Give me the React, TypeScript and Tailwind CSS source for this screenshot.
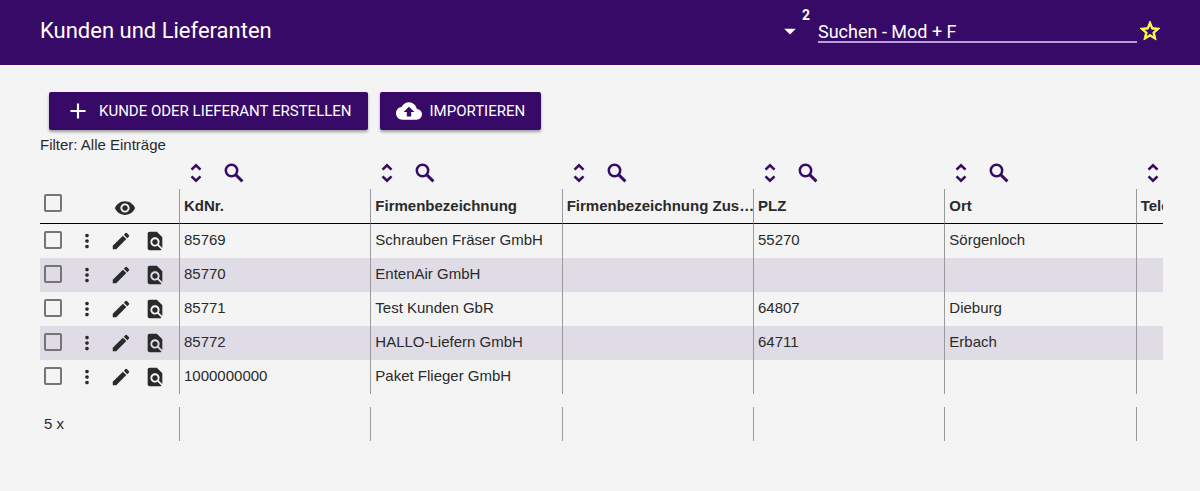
import {
  MdAdd,
  MdArrowDropDown,
  MdCloudUpload,
  MdEdit,
  MdFindInPage,
  MdMoreVert,
  MdVisibility,
} from 'react-icons/md'

interface Customer {
  id: string
  company: string
  suffix: string
  zip: string
  city: string
  phone: string
}

const columns: { key: keyof Customer; label: string }[] = [
  { key: 'id', label: 'KdNr.' },
  { key: 'company', label: 'Firmenbezeichnung' },
  { key: 'suffix', label: 'Firmenbezeichnung Zus…' },
  { key: 'zip', label: 'PLZ' },
  { key: 'city', label: 'Ort' },
  { key: 'phone', label: 'Telefon' },
]

const customers: Customer[] = [
  { id: '85769', company: 'Schrauben Fräser GmbH', suffix: '', zip: '55270', city: 'Sörgenloch', phone: '' },
  { id: '85770', company: 'EntenAir GmbH', suffix: '', zip: '', city: '', phone: '' },
  { id: '85771', company: 'Test Kunden GbR', suffix: '', zip: '64807', city: 'Dieburg', phone: '' },
  { id: '85772', company: 'HALLO-Liefern GmbH', suffix: '', zip: '64711', city: 'Erbach', phone: '' },
  { id: '1000000000', company: 'Paket Flieger GmbH', suffix: '', zip: '', city: '', phone: '' },
]

function StarIcon() {
  return (
    <svg viewBox="0 0 24 24" className="h-6 w-6" fill="currentColor" stroke="currentColor" strokeWidth="0.8">
      <path d="M22 9.24l-7.19-.62L12 2 9.19 8.63 2 9.24l5.46 4.73L5.82 21 12 17.27 18.18 21l-1.63-7.03L22 9.24zM12 15.4l-3.76 2.27 1-4.28-3.32-2.88 4.38-.38L12 6.1l1.71 4.04 4.38.38-3.32 2.88 1 4.28L12 15.4z" />
    </svg>
  )
}

function SortIcon() {
  return (
    <svg viewBox="0 0 24 24" className="h-6 w-6" fill="none" stroke="currentColor" strokeWidth="2.6">
      <path d="M7.5 8.6L12 4.4l4.5 4.2M7.5 15.4l4.5 4.2 4.5-4.2" />
    </svg>
  )
}

function SearchIcon() {
  return (
    <svg viewBox="0 0 24 24" className="h-6 w-6" fill="none" stroke="currentColor">
      <circle cx="9.5" cy="9.5" r="5.7" strokeWidth="2.5" />
      <path d="M13.6 13.6l6.8 6.8" strokeWidth="2.9" />
    </svg>
  )
}

function Checkbox({ label }: { label: string }) {
  return (
    <input
      type="checkbox"
      aria-label={label}
      className="block h-[18px] w-[18px] shrink-0 appearance-none rounded-xs border-2 border-[#757477] checked:bg-[#370a68]"
    />
  )
}

function Header() {
  return (
    <header className="flex h-[65px] items-center bg-[#370a68] pr-[38px] pb-1 pl-10 font-['Roboto',sans-serif] text-white">
      <h1 className="grow text-[22px] leading-6">Kunden und Lieferanten</h1>
      <button type="button" aria-label="Suchverlauf" className="relative mr-[14px] text-white">
        <MdArrowDropDown className="h-7 w-7" />
        <span className="absolute -top-2.5 left-[26px] text-sm leading-4 font-bold">2</span>
      </button>
      <input
        type="text"
        aria-label="Suchen"
        placeholder="Suchen - Mod + F"
        className="h-6 w-[319px] border-b-2 border-[#b99fdc] bg-transparent pt-1 text-lg leading-5 text-white outline-none placeholder:text-white"
      />
      <button type="button" aria-label="Favorit" className="ml-px text-[#ffff4d]">
        <StarIcon />
      </button>
    </header>
  )
}

function Toolbar() {
  const button =
    "flex h-[38px] items-center rounded-xs bg-[#370a68] px-4 font-['Roboto',sans-serif] text-[15px] text-white shadow-[0_2px_3px_rgba(0,0,0,0.35)]"
  return (
    <div className="flex gap-3 pl-[9px]">
      <button type="button" className={button}>
        <MdAdd className="mr-2 h-[26px] w-[26px]" />
        KUNDE ODER LIEFERANT ERSTELLEN
      </button>
      <button type="button" className={button}>
        <MdCloudUpload className="mr-2 h-[26px] w-[26px]" />
        IMPORTIEREN
      </button>
    </div>
  )
}

function CustomerTable() {
  return (
    <div className="overflow-hidden">
      <table className="w-[1287px] table-fixed border-separate border-spacing-0 text-left">
        <colgroup>
          <col className="w-[139px]" />
          {columns.map((column) => (
            <col key={column.key} />
          ))}
        </colgroup>
        <thead>
          <tr className="h-[34px]">
            <td />
            {columns.map((column) => (
              <td key={column.key} className="pt-0.5 pl-[5px]">
                <div className="flex gap-[14px] text-[#370a68]">
                  <button type="button" aria-label={`${column.label} sortieren`}>
                    <SortIcon />
                  </button>
                  <button type="button" aria-label={`${column.label} suchen`}>
                    <SearchIcon />
                  </button>
                </div>
              </td>
            ))}
          </tr>
          <tr className="h-[35px]">
            <th className="border-b border-black pl-1">
              <div className="flex items-center gap-[52px]">
                <div className="pb-1.5">
                  <Checkbox label="Alle auswählen" />
                </div>
                <button type="button" aria-label="Spalten anzeigen" className="pt-1">
                  <MdVisibility className="h-[22px] w-[22px]" />
                </button>
              </div>
            </th>
            {columns.map((column) => (
              <th
                key={column.key}
                className="overflow-hidden border-b border-l border-b-black border-l-[#9a9a9d] pl-1 font-bold whitespace-nowrap"
              >
                {column.label}
              </th>
            ))}
          </tr>
        </thead>
        <tbody>
          {customers.map((customer) => (
            <tr key={customer.id} className="h-[34px] even:bg-[#e0dce6]">
              <td className="pb-0.5 pl-1">
                <div className="flex items-center gap-[14px]">
                  <Checkbox label={`${customer.company} auswählen`} />
                  <div className="flex gap-3 pt-0.5">
                    <button type="button" aria-label="Menü">
                      <MdMoreVert className="h-[22px] w-[22px]" />
                    </button>
                    <button type="button" aria-label="Bearbeiten">
                      <MdEdit className="h-[22px] w-[22px]" />
                    </button>
                    <button type="button" aria-label="Vorschau">
                      <MdFindInPage className="h-[22px] w-[22px]" />
                    </button>
                  </div>
                </div>
              </td>
              {columns.map((column) => (
                <td key={column.key} className="truncate border-l border-[#9a9a9d] pb-0.5 pl-1">
                  {customer[column.key]}
                </td>
              ))}
            </tr>
          ))}
        </tbody>
        <tfoot>
          <tr className="h-[13px]">
            <td colSpan={7} />
          </tr>
          <tr className="h-[34px]">
            <td className="pl-1">{customers.length} x</td>
            {columns.map((column) => (
              <td key={column.key} className="border-l border-[#9a9a9d]" />
            ))}
          </tr>
        </tfoot>
      </table>
    </div>
  )
}

export default function App() {
  return (
    <div className="min-h-screen bg-[#f4f4f4] font-['Liberation_Sans',Arial,sans-serif] text-[15px] leading-5 text-[#2a2a2a]">
      <Header />
      <main className="pt-[27px] pr-[37px] pb-10 pl-10">
        <Toolbar />
        <p className="pt-[5px]">Filter: Alle Einträge</p>
        <CustomerTable />
      </main>
    </div>
  )
}
